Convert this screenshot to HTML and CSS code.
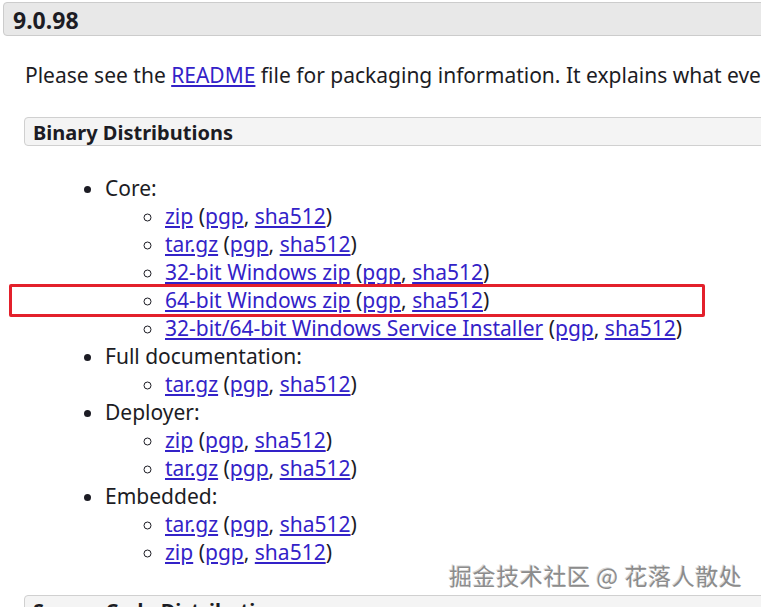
FILE: index.html
```html
<!DOCTYPE html>
<html lang="en">
<head>
  <meta charset="UTF-8" />
  <meta name="viewport" content="width=device-width, initial-scale=1.0" />
  <title>Apache Tomcat 9 Downloads</title>
  <link rel="stylesheet" href="styles.css">
</head>
<body>
  <div class="page">
    <h3 class="version">9.0.98</h3>
    <div class="release">
      <p class="intro">Please see the <a href="#">README</a> file for packaging information. It explains what every distribution contains.</p>

      <h4 class="dist-title">Binary Distributions</h4>
      <ul class="dist-list">
        <li>Core:
          <ul>
            <li><a href="#">zip</a> (<a href="#">pgp</a>, <a href="#">sha512</a>)</li>
            <li><a href="#">tar.gz</a> (<a href="#">pgp</a>, <a href="#">sha512</a>)</li>
            <li><a href="#">32-bit Windows zip</a> (<a href="#">pgp</a>, <a href="#">sha512</a>)</li>
            <li class="marked"><a href="#">64-bit Windows zip</a> (<a href="#">pgp</a>, <a href="#">sha512</a>)</li>
            <li><a href="#">32-bit/64-bit Windows Service Installer</a> (<a href="#">pgp</a>, <a href="#">sha512</a>)</li>
          </ul>
        </li>
        <li>Full documentation:
          <ul>
            <li><a href="#">tar.gz</a> (<a href="#">pgp</a>, <a href="#">sha512</a>)</li>
          </ul>
        </li>
        <li>Deployer:
          <ul>
            <li><a href="#">zip</a> (<a href="#">pgp</a>, <a href="#">sha512</a>)</li>
            <li><a href="#">tar.gz</a> (<a href="#">pgp</a>, <a href="#">sha512</a>)</li>
          </ul>
        </li>
        <li>Embedded:
          <ul>
            <li><a href="#">tar.gz</a> (<a href="#">pgp</a>, <a href="#">sha512</a>)</li>
            <li><a href="#">zip</a> (<a href="#">pgp</a>, <a href="#">sha512</a>)</li>
          </ul>
        </li>
      </ul>

      <h4 class="dist-title">Source Code Distributions</h4>
    </div>
  </div>
  <div class="watermark">掘金技术社区 @ 花落人散处</div>
</body>
</html>
```

FILE: styles.css
```css
html, body {
  margin: 0;
  padding: 0;
  overflow: hidden;
}

body {
  font-family: 'Noto Sans', 'Open Sans', sans-serif;
  font-size: 21px;
  line-height: 28px;
  color: #1c1c24;
  background-color: #fff;
}

a {
  color: #3322c8;
}

.page {
  width: 900px;
  padding: 2px 0 0 3px;
}

.version {
  margin: 0;
  padding: 2px 9px 2px 9px;
  height: 28px;
  font-size: 23px;
  line-height: 30px;
  font-weight: bold;
  background-color: #e8e8e8;
  border: 1px solid #cccccc;
  border-radius: 4px;
}

.release {
  padding-left: 21px;
}

.intro {
  margin: 25px 0 0 1px;
  white-space: nowrap;
}

.dist-title {
  margin: 28px 0 0 0;
  padding: 0 8px;
  height: 27px;
  font-size: 20px;
  line-height: 29px;
  font-weight: bold;
  background-color: #f4f4f4;
  border: 1px solid #d0d0d0;
  border-radius: 4px;
}

.dist-list {
  margin: 28px 0 0 0;
  padding-left: 81px;
  list-style: disc;
}

.dist-list ul {
  margin: 0;
  padding-left: 60px;
  list-style: circle;
}

.dist-list li {
  white-space: nowrap;
}

.marked {
  position: relative;
}

.marked::before {
  content: "";
  position: absolute;
  left: -156px;
  top: -2px;
  width: 690px;
  height: 27px;
  border: 3px solid #e3202b;
  border-radius: 2px;
}

.dist-list + .dist-title {
  margin-top: 29px;
}

.watermark {
  position: absolute;
  left: 449px;
  top: 560px;
  font-family: 'Noto Sans CJK SC', sans-serif;
  font-size: 23px;
  line-height: 30px;
  color: #8c8c8c;
  text-shadow: 1px 1px 0 #ffffff, -1px -1px 0 #dadada;
  letter-spacing: 0.6px;
}
```
